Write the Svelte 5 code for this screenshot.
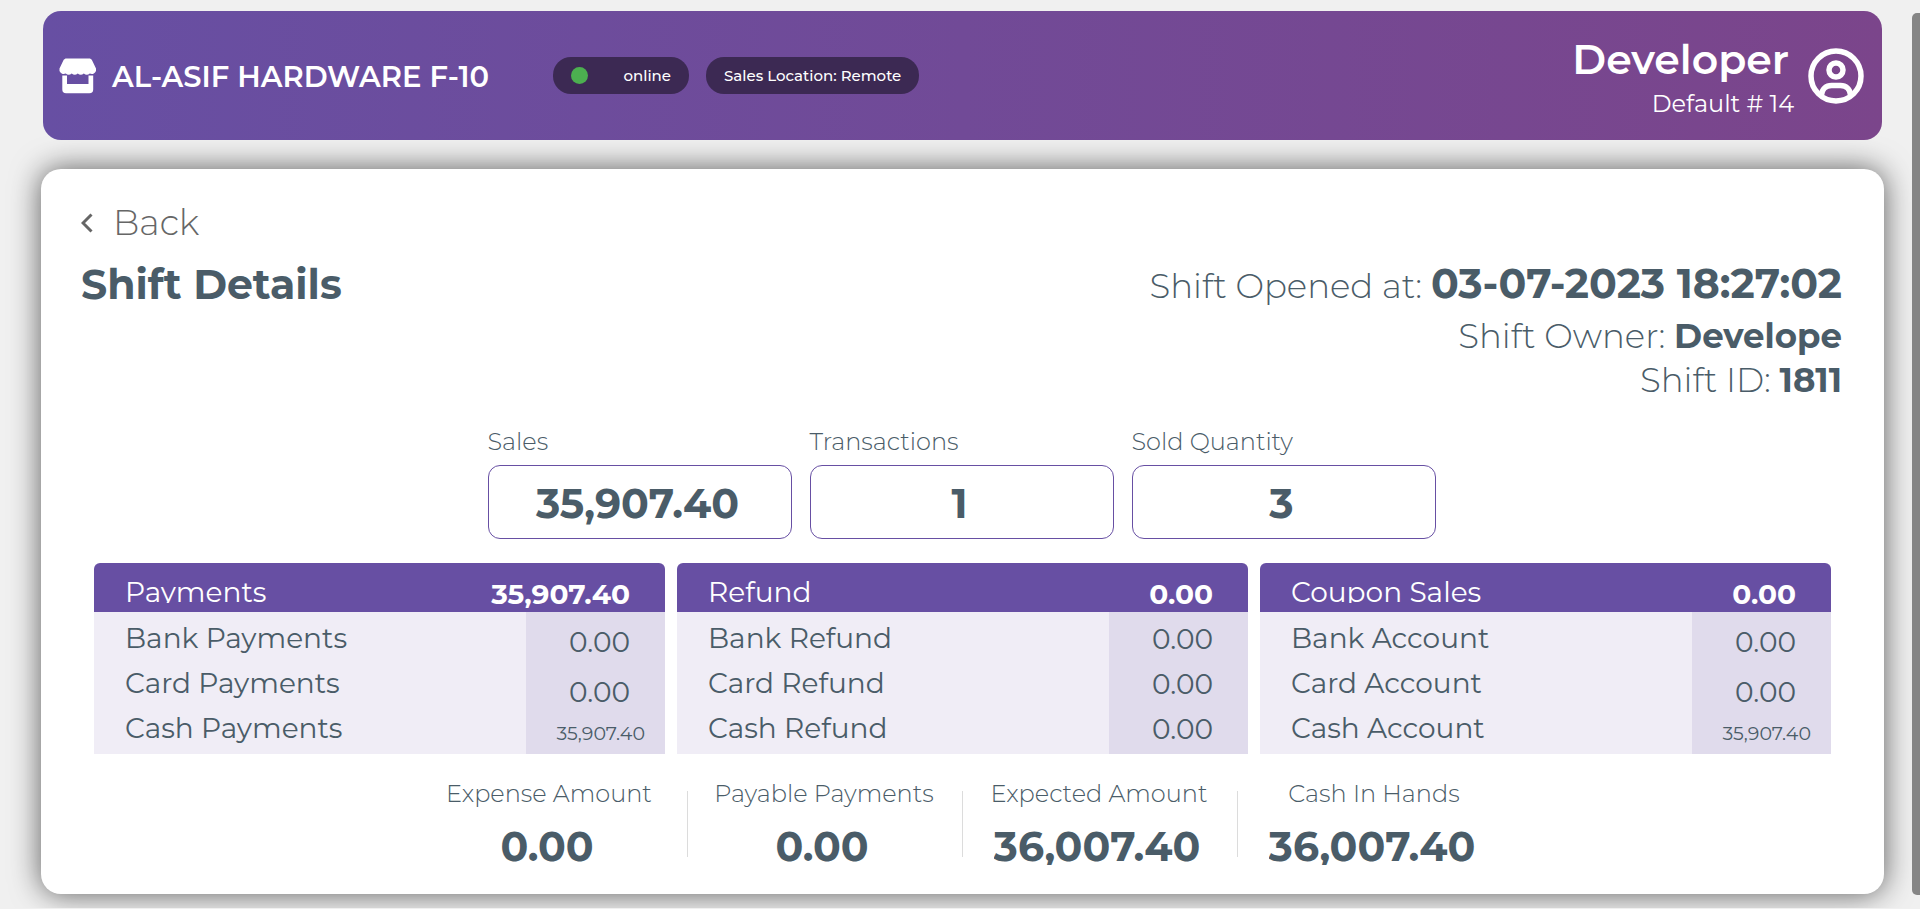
<script>
  const stats = [
    { label: 'Sales', value: '35,907.40' },
    { label: 'Transactions', value: '1' },
    { label: 'Sold Quantity', value: '3' }
  ];

  const ledgers = [
    {
      title: 'Payments',
      total: '35,907.40',
      staggered: true,
      rows: [
        ['Bank Payments', '0.00'],
        ['Card Payments', '0.00'],
        ['Cash Payments', '35,907.40']
      ]
    },
    {
      title: 'Refund',
      total: '0.00',
      staggered: false,
      rows: [
        ['Bank Refund', '0.00'],
        ['Card Refund', '0.00'],
        ['Cash Refund', '0.00']
      ]
    },
    {
      title: 'Coupon Sales',
      total: '0.00',
      staggered: true,
      rows: [
        ['Bank Account', '0.00'],
        ['Card Account', '0.00'],
        ['Cash Account', '35,907.40']
      ]
    }
  ];

  const summary = [
    { label: 'Expense Amount', value: '0.00' },
    { label: 'Payable Payments', value: '0.00' },
    { label: 'Expected Amount', value: '36,007.40' },
    { label: 'Cash In Hands', value: '36,007.40' }
  ];
</script>

<div class="page">
  <header class="topbar">
    <svg class="store" viewBox="0 0 38 36" aria-hidden="true">
      <path d="M6.500 0.500h24.500l1.800 1.200 4.200 8.800v2.500a4.500 4.500 0 0 1-6.200 2.500 4.500 4.500 0 0 1-6 0 4.500 4.500 0 0 1-6.050 0 4.500 4.500 0 0 1-6.050 0 4.500 4.500 0 0 1-6 0A4.500 4.500 0 0 1 .5 13v-2.500l4.200-8.800z" />
      <path d="M3.300 17.500h4.700V26h21.500v-8.500h4.700V31.500a3.800 3.800 0 0 1-3.800 3.800h-23.300a3.800 3.800 0 0 1-3.800-3.800z" />
    </svg>
    <h1>AL-ASIF HARDWARE F-10</h1>
    <div class="pills">
      <span class="pill status"><i class="dot"></i>online</span>
      <span class="pill">Sales Location: Remote</span>
    </div>
    <div class="user">
      <div class="who">
        <strong>Developer</strong>
        <span>Default # 14</span>
      </div>
      <svg class="avatar" viewBox="0 0 56 56" aria-hidden="true">
        <circle cx="28" cy="28" r="25" />
        <circle cx="28" cy="22" r="7" />
        <path d="M13.500 47c.5-6 4.500-9.500 10-9.500h9c5.500 0 9.500 3.500 10 9.500" />
      </svg>
    </div>
  </header>

  <main class="card">
    <button class="back" type="button">
      <svg viewBox="0 0 12 20" aria-hidden="true"><path d="M10.500 1.500 2 10l8.500 8.500" /></svg>
      Back
    </button>

    <section class="heading">
      <h2>Shift Details</h2>
      <div class="meta">
        <p class="opened">Shift Opened at: <b>03-07-2023 18:27:02</b></p>
        <p>Shift Owner: <b>Develope</b></p>
        <p>Shift ID: <b>1811</b></p>
      </div>
    </section>

    <section class="stats">
      {#each stats as s}
        <div class="stat">
          <span class="caption">{s.label}</span>
          <div class="box">{s.value}</div>
        </div>
      {/each}
    </section>

    <section class="ledgers">
      {#each ledgers as l}
        <table class:staggered={l.staggered}>
          <thead>
            <tr>
              <th scope="col"><span class="title">{l.title}</span></th>
              <th scope="col" class="total">{l.total}</th>
            </tr>
          </thead>
          <tbody>
            {#each l.rows as [name, amount]}
              <tr>
                <td>{name}</td>
                <td class="amount" class:long={amount.length > 6}>{amount}</td>
              </tr>
            {/each}
          </tbody>
        </table>
      {/each}
    </section>

    <section class="summary">
      {#each summary as s}
        <div class="sum">
          <span class="caption">{s.label}</span>
          <strong>{s.value}</strong>
        </div>
      {/each}
    </section>
  </main>

  <div class="thumb"></div>
</div>

<style>
  :global(body) {
    margin: 0;
    background: #f0f0f0;
  }
  .page {
    box-sizing: border-box;
    padding: 11px 36px 14px 41px;
    overflow: hidden;
    font-family: Montserrat, Inter, sans-serif;
    color: #4a5c68;
  }
  h1, h2, p {
    margin: 0;
  }
  .topbar {
    position: relative;
    z-index: 1;
    box-sizing: border-box;
    display: flex;
    align-items: center;
    min-height: 129px;
    margin: 0 2px 29px;
    padding: 0 18px 0 16px;
    border-radius: 18px;
    background: linear-gradient(90deg, #674fa3, #7b458b);
    color: #fff;
  }
  .store {
    width: 38px;
    height: 36px;
    fill: #fff;
  }
  h1 {
    padding-top: 2px;
    margin-left: 15px;
    font-size: 29px;
    line-height: 36px;
    font-weight: 600;
    white-space: nowrap;
  }
  .pills {
    display: flex;
    gap: 17px;
    margin-left: 64px;
  }
  .pill {
    display: flex;
    align-items: center;
    justify-content: space-between;
    height: 37px;
    padding: 0 18px;
    border-radius: 18px;
    background: #3c2953;
    font-size: 15px;
    font-weight: 500;
    white-space: nowrap;
  }
  .status {
    min-width: 100px;
  }
  .dot {
    width: 17px;
    height: 17px;
    border-radius: 50%;
    background: #4caf50;
  }
  .user {
    display: flex;
    align-items: center;
    gap: 14px;
    margin-left: auto;
  }
  .who {
    display: flex;
    flex-direction: column;
    align-items: flex-end;
    padding-top: 6px;
  }
  .who strong {
    padding-right: 5px;
    font-size: 41px;
    line-height: 50px;
    font-weight: 600;
  }
  .who span {
    font-size: 24px;
    line-height: 40px;
    font-weight: 400;
  }
  .avatar {
    width: 56px;
    height: 56px;
    fill: none;
    stroke: #fff;
    stroke-width: 5.5;
  }
  .card {
    padding: 32px 42px 29px 40px;
    border-radius: 20px;
    background: #fff;
    box-shadow: 0 0 30px rgba(0, 0, 0, 0.62);
  }
  .back {
    display: flex;
    align-items: center;
    gap: 20px;
    padding: 0;
    border: 0;
    background: none;
    color: #666;
    font: 300 35px/44px Montserrat, Inter, sans-serif;
  }
  .back svg {
    width: 12px;
    height: 20px;
    fill: none;
    stroke: #666;
    stroke-width: 3;
  }
  .heading {
    display: flex;
    justify-content: space-between;
    margin-top: 15px;
  }
  h2 {
    font-size: 41px;
    line-height: 48px;
    font-weight: 700;
  }
  .meta {
    padding-top: 2px;
    text-align: right;
    font-size: 34px;
    line-height: 44px;
    font-weight: 300;
  }
  .meta b {
    font-weight: 700;
  }
  .meta .opened {
    margin-bottom: 4px;
    line-height: 48px;
  }
  .meta .opened b {
    font-size: 41px;
    line-height: 40px;
  }
  .caption {
    font-size: 24px;
    line-height: 30px;
    font-weight: 300;
    white-space: nowrap;
  }
  .stats {
    display: flex;
    justify-content: center;
    gap: 18px;
    margin-top: 25px;
  }
  .stat {
    display: flex;
    flex-direction: column;
    gap: 8px;
    width: 304px;
  }
  .box {
    display: flex;
    align-items: center;
    justify-content: center;
    box-sizing: border-box;
    height: 74px;
    padding: 2px 4px 0 0;
    border: 1px solid #674fa3;
    border-radius: 12px;
    font-size: 41px;
    font-weight: 700;
  }
  .ledgers {
    display: grid;
    grid-template-columns: repeat(3, 1fr);
    gap: 12px;
    margin: 24px 11px 0 13px;
  }
  table {
    width: 100%;
    border-spacing: 0;
    table-layout: fixed;
    font-size: 28px;
    line-height: 36px;
  }
  th, td {
    box-sizing: border-box;
    height: 45px;
    padding: 8px 0 0 31px;
    vertical-align: top;
    text-align: left;
    white-space: nowrap;
    font-weight: 400;
  }
  th {
    height: 49px;
    padding-top: 11px;
    background: #674fa3;
    color: #fff;
  }
  th:first-child {
    border-top-left-radius: 6px;
  }
  .title {
    display: block;
    height: 29px;
    overflow: hidden;
  }
  .total {
    width: 200px;
    padding: 13px 35px 0 0;
    border-top-right-radius: 6px;
    text-align: right;
    font-weight: 700;
  }
  tbody tr {
    background: linear-gradient(270deg, #e0dbec 139px, #f0edf6 139px);
  }
  tbody tr:last-child td {
    height: 52px;
  }
  .amount {
    padding: 17px 35px 0 0;
    text-align: right;
    line-height: 20px;
  }
  .staggered .amount {
    padding-top: 20px;
  }
  .staggered tr:nth-child(2) .amount {
    padding-top: 25px;
  }
  .staggered .long {
    padding: 22px 20px 0 0;
    font-size: 19px;
  }
  .summary {
    display: flex;
    justify-content: center;
    margin-top: 25px;
  }
  .sum {
    position: relative;
    display: flex;
    flex-direction: column;
    align-items: center;
    gap: 13px;
    width: 275px;
  }
  .sum strong {
    height: 43px;
    padding-right: 4px;
    overflow: hidden;
    font-size: 41px;
    line-height: 48px;
    font-weight: 700;
  }
  .sum + .sum::before {
    content: '';
    position: absolute;
    left: 0;
    top: 12px;
    width: 1px;
    height: 66px;
    background: #dcdcdc;
  }
  .thumb {
    position: fixed;
    top: 13px;
    right: 0;
    bottom: 14px;
    width: 8px;
    border-radius: 5px 0 0 5px;
    background: #858585;
  }
</style>
